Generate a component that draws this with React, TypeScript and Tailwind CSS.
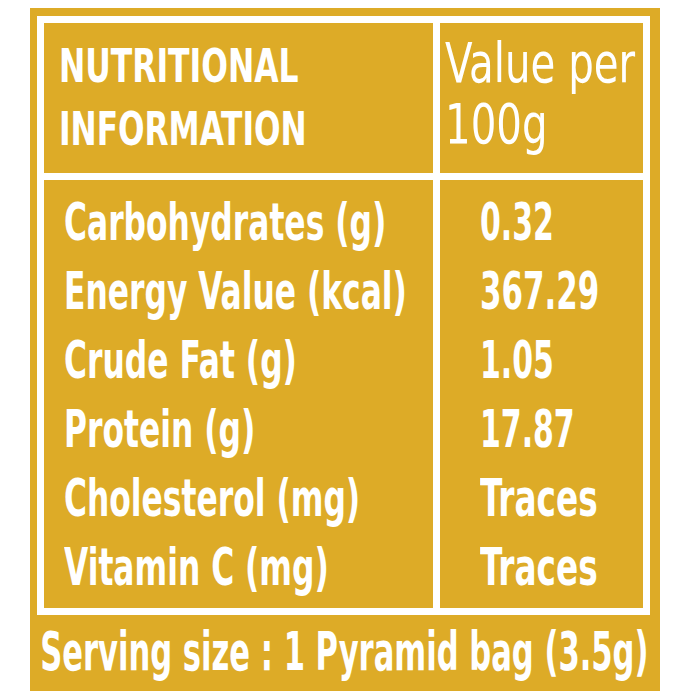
import React from 'react';

const rows = [
  { name: 'Carbohydrates (g)', value: '0.32', sx: 'scale-x-[0.64]' },
  { name: 'Energy Value (kcal)', value: '367.29', sx: 'scale-x-[0.66]' },
  { name: 'Crude Fat (g)', value: '1.05', sx: 'scale-x-[0.64]' },
  { name: 'Protein (g)', value: '17.87', sx: 'scale-x-[0.64]' },
  { name: 'Cholesterol (mg)', value: 'Traces', sx: 'scale-x-[0.70]' },
  { name: 'Vitamin C (mg)', value: 'Traces', sx: 'scale-x-[0.70]' },
];

const font = "font-['DejaVu_Sans_Condensed','DejaVu_Sans',sans-serif] font-stretch-condensed";

export default function App() {
  return (
    <div className="min-h-screen w-full overflow-hidden bg-white pt-[8px] pl-[30px]">
      <div className={`w-[630px] h-[683px] bg-[#ddab27] pt-[8px] pl-[7px] text-white ${font}`}>
        {/* table with white rules */}
        <div className="w-[613px] bg-white p-[7px] grid grid-cols-[389px_203px] grid-rows-[150px_428px] gap-[7px]">
          <div className="bg-[#ddab27] pl-[15px] pt-[11px] font-bold text-[47px] leading-[63px]">
            <div className="whitespace-nowrap origin-left scale-x-[0.743]">NUTRITIONAL</div>
            <div className="whitespace-nowrap origin-left scale-x-[0.738]">INFORMATION</div>
          </div>
          <div className="bg-[#ddab27] pl-[5px] pt-[9px] font-normal text-[56px] leading-[61px]">
            <div className="whitespace-nowrap origin-left scale-x-[0.8]">Value per</div>
            <div className="whitespace-nowrap origin-left scale-x-[0.8]">100g</div>
          </div>
          <div className="bg-[#ddab27] pl-[20px] pt-[8px] font-bold text-[52px] leading-[69px]">
            {rows.map((r) => (
              <div key={r.name} className="whitespace-nowrap origin-left scale-x-[0.67]">
                {r.name}
              </div>
            ))}
          </div>
          <div className="bg-[#ddab27] pl-[40px] pt-[8px] font-bold text-[52px] leading-[69px]">
            {rows.map((r) => (
              <div key={r.name} className={`whitespace-nowrap origin-left ${r.sx}`}>
                {r.value}
              </div>
            ))}
          </div>
        </div>
        <div className="mt-[7px] pl-[5px] font-bold text-[54px] leading-[60px] whitespace-nowrap origin-left scale-x-[0.63]">
          Serving size : 1 Pyramid bag (3.5g)
        </div>
      </div>
    </div>
  );
}
